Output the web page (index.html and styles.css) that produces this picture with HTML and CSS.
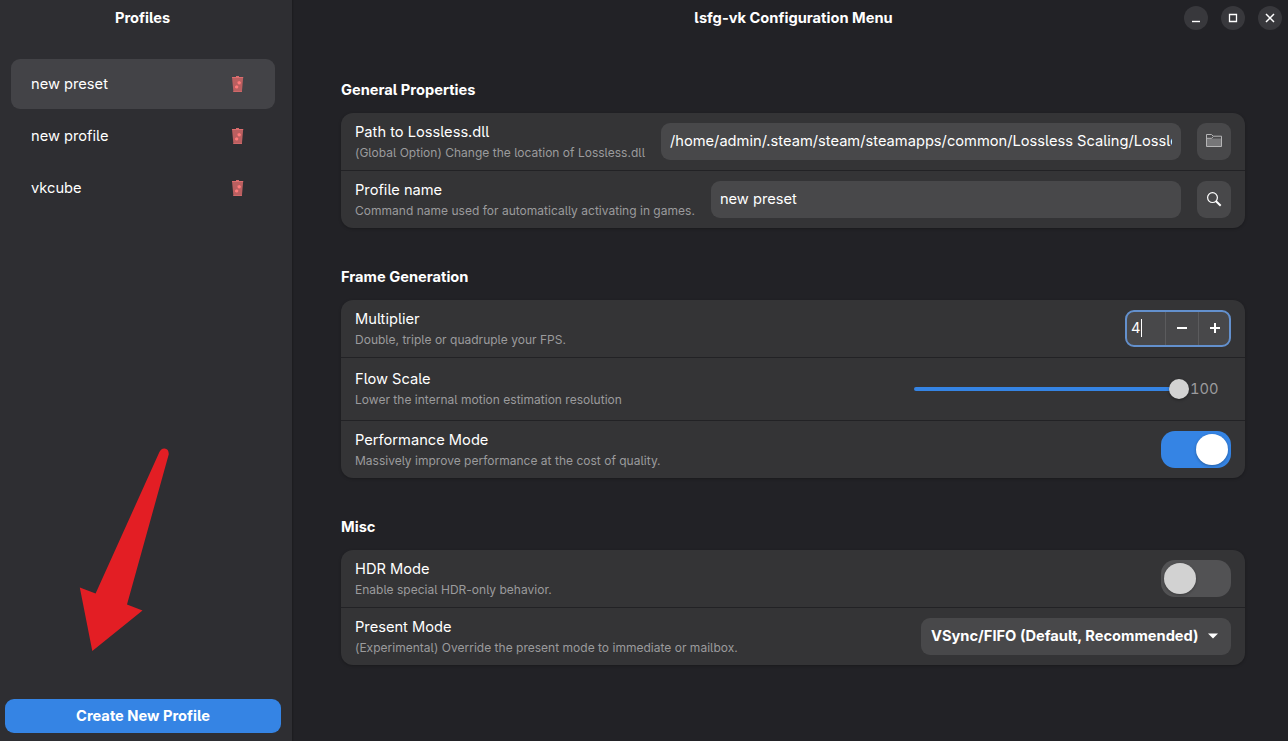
FILE: index.html
```html
<!DOCTYPE html>
<html lang="en">
<head>
<title>lsfg-vk Configuration Menu</title>
<meta charset="UTF-8">
<meta name="viewport" content="width=device-width, initial-scale=1">
<link rel="stylesheet" href="styles.css">
</head>
<body>
<svg class="defs" width="0" height="0">
 <symbol id="trash" viewBox="0 0 12 16">
  <path d="M4 1.2V.2h3v1z" fill="#ff7b7b"/>
  <path d="M0 1h11.2l-1.3 15H1.4z" fill="#ba5f60"/>
  <path d="M0 1h11.2l-.1 1H.1z" fill="#dd6d6e"/>
  <path d="M1.4 15h8.6l-.1 1H1.5z" fill="#cf6869"/>
  <path d="M5.5 5.8l2-.8 1.5 1.3-.6 2-1.7.3-1.2-1.3zM3.2 9.9l1.8-.6 1.4 1.3-.5 1.7-1.8.3-1.2-1.2z" fill="#ff7b7b"/>
 </symbol>
</svg>

<aside class="sidebar">
 <header class="titlebar">Profiles</header>
 <ul class="profiles">
  <li class="profile selected">new preset <svg class="trash"><use href="#trash"/></svg></li>
  <li class="profile">new profile <svg class="trash"><use href="#trash"/></svg></li>
  <li class="profile">vkcube <svg class="trash"><use href="#trash"/></svg></li>
 </ul>
 <button class="create">Create New Profile</button>
 <svg class="arrow" width="92" height="206" viewBox="0 0 92 206">
  <path d="M80.3 5.3Q82 1.2 85.5 1.4Q90.1 2 89.7 7.5L48 157.5L63.5 163.5L13.3 204L.8 140.5L16.6 146.5Z" fill="#e31e24"/>
 </svg>
</aside>

<main class="content">
 <header class="titlebar">
  lsfg-vk Configuration Menu
  <div class="controls">
   <button><svg width="24" height="24"><path d="M8 15.5h8" stroke-width="1.4"/></svg></button>
   <button><svg width="24" height="24"><path d="M8.5 8.5h7v7h-7z"/></svg></button>
   <button><svg width="24" height="24"><path d="M8 8l8 8M16 8l-8 8" stroke-width="1.5"/></svg></button>
  </div>
 </header>

 <div class="groups">
 <section>
  <h2>General Properties</h2>
  <div class="card">
   <div class="row">
    <div class="label">Path to Lossless.dll <small>(Global Option) Change the location of Lossless.dll</small></div>
    <div class="entry"><span>/home/admin/.steam/steam/steamapps/common/Lossless Scaling/Lossless.dll</span></div>
    <button class="icon-button">
     <svg width="16" height="16" viewBox="0 0 16 16">
      <path d="M.5 4.5h15v8H.5z" fill="#777779"/>
      <path d="M.5 12.5V.5h5l1.7 1.7h8.3v10.3zM.5 4.3h5l1.7-1.5" fill="none" stroke="#b5b5b6"/>
     </svg>
    </button>
   </div>
   <div class="row">
    <div class="label">Profile name <small>Command name used for automatically activating in games.</small></div>
    <div class="entry"><span>new preset</span></div>
    <button class="icon-button">
     <svg width="16" height="16" viewBox="0 0 16 16" fill="none" stroke="#fff">
      <circle cx="6.5" cy="5.6" r="4.9" stroke-width="1.2"/>
      <path d="M9.8 9l4.9 4.8" stroke-width="2"/>
     </svg>
    </button>
   </div>
  </div>
 </section>

 <section>
  <h2>Frame Generation</h2>
  <div class="card">
   <div class="row">
    <div class="label">Multiplier <small>Double, triple or quadruple your FPS.</small></div>
    <div class="spin">
     <span class="value">4<i class="caret"></i></span>
     <button><svg width="12" height="12"><path d="M1 6h10"/></svg></button>
     <button><svg width="12" height="12"><path d="M1 6h10M6 1v10"/></svg></button>
    </div>
   </div>
   <div class="row tall">
    <div class="label">Flow Scale <small>Lower the internal motion estimation resolution</small></div>
    <div class="scale"><div class="track"></div><div class="knob"></div><span>100</span></div>
   </div>
   <div class="row">
    <div class="label">Performance Mode <small>Massively improve performance at the cost of quality.</small></div>
    <div class="switch on"></div>
   </div>
  </div>
 </section>

 <section>
  <h2>Misc</h2>
  <div class="card">
   <div class="row">
    <div class="label">HDR Mode <small>Enable special HDR-only behavior.</small></div>
    <div class="switch"></div>
   </div>
   <div class="row">
    <div class="label">Present Mode <small>(Experimental) Override the present mode to immediate or mailbox.</small></div>
    <button class="dropdown">VSync/FIFO (Default, Recommended)
     <svg width="10" height="6"><path d="M0 .5h10L5 5.5z" fill="#fff"/></svg>
    </button>
   </div>
  </div>
 </section>
 </div>
</main>
</body>
</html>
```
FILE: styles.css
```css
* { box-sizing: border-box; }
body { margin: 0; height: 741px; display: flex; overflow: hidden;
       font: 14.667px/20px Inter, sans-serif; color: #fff;
       font-feature-settings: "cv05"; background: #222226; }
button { border: 0; padding: 0; margin: 0; font: inherit; color: inherit;
         font-feature-settings: inherit;
         display: flex; align-items: center; justify-content: center; }
svg { display: block; flex: none; }
.defs { position: absolute; }

.titlebar { height: 36px; display: flex; align-items: center;
            justify-content: center; font-weight: 700; }

/* sidebar */
.sidebar { width: 292px; flex: none; display: flex; flex-direction: column;
           position: relative; background: #2e2e32;
           box-shadow: 1px 0 1px #1d1d20; }
.sidebar .titlebar { padding-right: 7px; }
.profiles { list-style: none; margin: 23px 17px 0 11px; padding: 0;
            display: flex; flex-direction: column; gap: 2px; flex: 1; }
.profile { height: 50px; border-radius: 9px; padding: 0 31px 0 20px;
           display: flex; align-items: center; justify-content: space-between; }
.profile.selected { background: #434347; }
.trash { width: 12px; height: 16px; }
.create { height: 34px; margin: 0 11px 8px 5px; border-radius: 9px;
          background: #3584e4; font-weight: 700; }
.arrow { position: absolute; left: 79px; top: 447px; }

/* main pane */
.content { flex: 1; min-width: 0; }
.content .titlebar { position: relative; padding-left: 7px; }
.controls { position: absolute; right: 6px; top: 6px; display: flex; gap: 13px; }
.controls button { width: 24px; height: 24px; border-radius: 50%;
                   background: #38383c; }
.controls svg { fill: none; stroke: #fff; stroke-width: 1.3; }

.groups { padding: 44px 43px 0 49px; display: flex; flex-direction: column;
          gap: 39px; }
h2 { margin: 0 0 13px; font-size: inherit; line-height: 20px; font-weight: 700; }
.card { background: #343436; border-radius: 12px;
        box-shadow: 0 1px 3px rgba(0,0,0,0.25); }
.row { height: 57px; padding: 0 14px; display: flex; align-items: center;
       gap: 16px; }
.row.tall { height: 63px; }
.row + .row { border-top: 1px solid #222225; height: 58px; }
.row + .row.tall { height: 63px; }
.label { flex: none; line-height: 20px; padding-top: 1px; }
.label small { display: block; margin-top: 1px; font-size: 12px; line-height: 20px;
               letter-spacing: 0.016px; color: #9b9b9d; }

.entry { flex: 1; min-width: 0; height: 37px; border-radius: 9px;
         padding: 0 9px 2px; background: #48484a; display: flex;
         align-items: center; }
.entry span { overflow: hidden; white-space: nowrap; letter-spacing: 0.005px; }
.icon-button { width: 34px; height: 37px; border-radius: 9px; flex: none;
               background: #48484a; }

.spin { margin-left: auto; width: 106px; height: 37px; display: flex;
        border: 2px solid #6390cd; border-radius: 9px; background: #48484a; }
.spin .value { flex: 1; padding: 0 0 2px 4px; display: flex; align-items: center;
               font-feature-settings: "tnum"; }
.caret { width: 1px; height: 18px; background: #fff; }
.spin button { width: 33px; padding-bottom: 1px; border-left: 1px solid #5b5b5d;
               background: none; }
.spin button:last-child { width: 31px; padding-left: 1px; }
.spin svg { stroke: #fff; stroke-width: 2; }

.scale { margin-left: auto; display: flex; align-items: center;
         padding-right: 12px; color: #9b9b9d; }
.track { width: 256px; height: 4px; border-radius: 2px 0 0 2px;
         background: #3584e4; }
.knob { width: 20px; height: 20px; border-radius: 50%; background: #d2d2d2;
        margin-left: -1px; box-shadow: 0 1px 3px rgba(0,0,0,0.4); }
.scale span { margin-left: 1px; width: 29px; font-feature-settings: "tnum"; }

.switch { margin-left: auto; width: 70px; height: 37px; border-radius: 14px;
          padding: 3px; display: flex; background: #525254; }
.switch::before { content: ''; width: 32px; height: 31px; border-radius: 50%;
                  background: #d2d2d2; box-shadow: 0 1px 3px rgba(0,0,0,0.3); }
.switch.on { background: #3584e4; justify-content: flex-end; }
.switch.on::before { background: #fff; }

.dropdown { margin-left: auto; width: 310px; height: 37px; border-radius: 9px;
            padding: 0 13px 1px 10px; justify-content: space-between;
            background: #48484a; font-weight: 700; }
```
